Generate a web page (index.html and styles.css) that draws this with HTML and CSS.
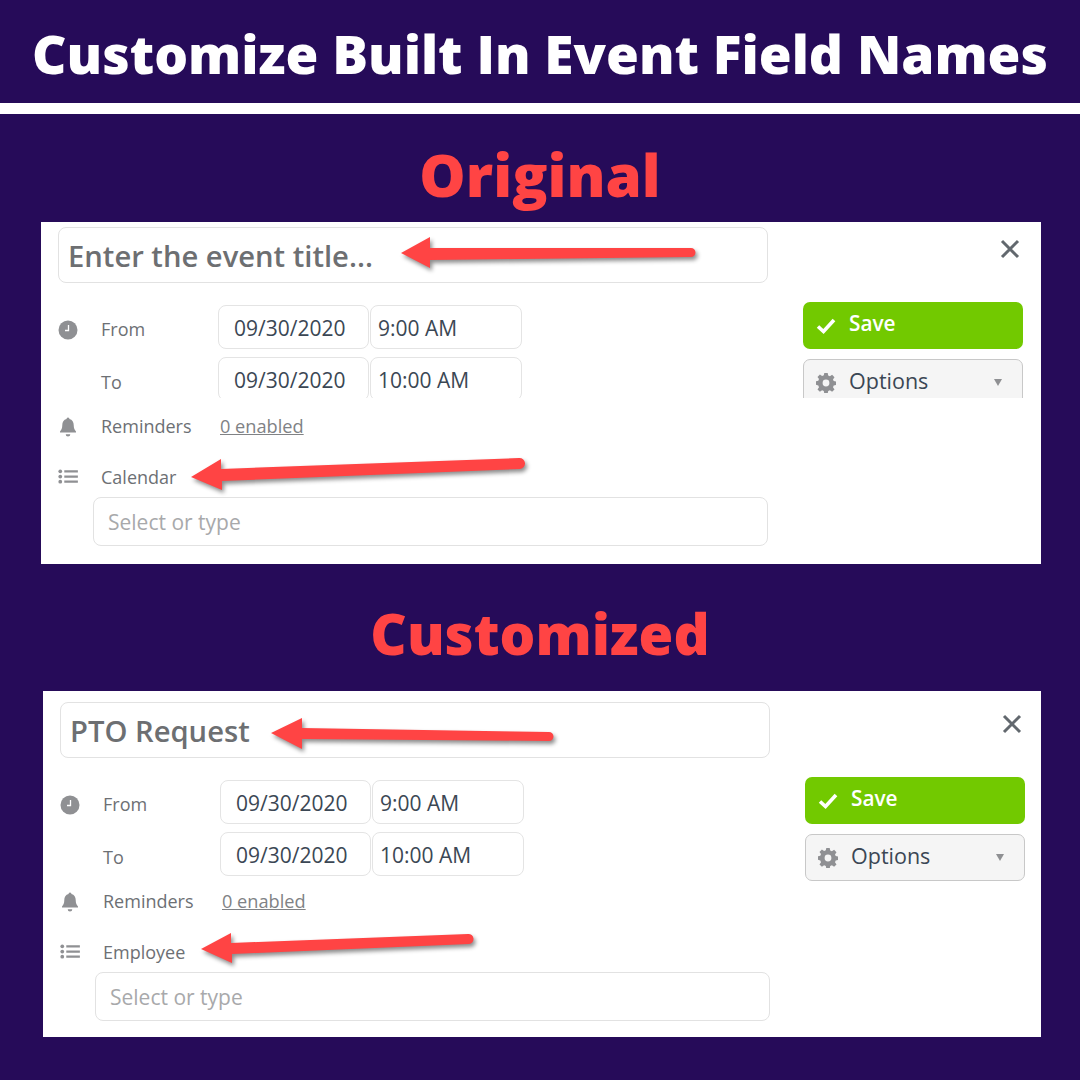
FILE: index.html
```html
<!DOCTYPE html>
<html lang="en">
<head>
    <meta charset="UTF-8">
    <meta name="viewport" content="width=device-width, initial-scale=1.0">
    <title>Customize Built In Event Field Names</title>
    <link rel="stylesheet" href="styles.css">
</head>
<body>

<svg class="icon-defs" aria-hidden="true">
    <symbol id="i-clock" viewBox="0 0 20 20">
        <circle cx="10" cy="10" r="9.5" fill="#8f9093"/>
        <path d="M10.500 5V10.500H7" fill="none" stroke="#fff" stroke-width="1.300"/>
    </symbol>
    <symbol id="i-bell" viewBox="0 0 20 20">
        <path d="M10 .5a1.4 1.4 0 0 1 1.4 1.6c3 .7 4.3 3 4.3 6 0 3.600 1 4.800 2.300 6.400v1H2v-1c1.300-1.600 2.300-2.800 2.300-6.400 0-3 1.300-5.300 4.300-6A1.400 1.400 0 0 1 10 .5zM7.700 17.200h4.600a2.300 2.300 0 0 1-4.600 0z" fill="#8f9093"/>
    </symbol>
    <symbol id="i-list" viewBox="0 0 22 16">
        <circle cx="2.200" cy="2.500" r="2" fill="#8f9093"/>
        <circle cx="2.200" cy="8" r="2" fill="#8f9093"/>
        <circle cx="2.200" cy="13.500" r="2" fill="#8f9093"/>
        <path d="M6.500 2.500H21M6.500 8H21M6.500 13.500H21" stroke="#8f9093" stroke-width="2.400"/>
    </symbol>
    <symbol id="i-gear" viewBox="0 0 20 20">
        <path d="M8.300 0h3.400l.5 2.600 1.700.7 2.200-1.500 2.400 2.400-1.500 2.200.7 1.700 2.600.5v3.400l-2.600.5-.7 1.700 1.500 2.200-2.400 2.400-2.200-1.500-1.700.7-.5 2.600H8.300l-.5-2.600-1.700-.7-2.200 1.500-2.400-2.400 1.500-2.200-.7-1.700L-.3 11.700V8.300l2.600-.5.7-1.700-1.500-2.200 2.400-2.400 2.200 1.500 1.700-.7zM10 6.600a3.400 3.400 0 1 0 0 6.800 3.400 3.400 0 0 0 0-6.800z" fill="#8f9093" fill-rule="evenodd"/>
    </symbol>
    <symbol id="i-check" viewBox="0 0 20 16">
        <path d="M2 8.500l5.500 5L18 2" fill="none" stroke="#fff" stroke-width="3.600"/>
    </symbol>
    <symbol id="i-close" viewBox="0 0 20 20">
        <path d="M2 2l16 16M18 2L2 18" fill="none" stroke="#62686e" stroke-width="3"/>
    </symbol>
</svg>

<header class="top-bar">
    <h1>Customize Built In Event Field Names</h1>
</header>
<div class="rule"></div>

<main>
    <!-- Original form -->
    <h2 class="heading heading-first">Original</h2>
    <section class="card card-original">
        <div class="card-top">
            <div class="title-row">
                <div class="title-input">Enter the event title...</div>
                <svg class="close-icon"><use href="#i-close"/></svg>
            </div>
            <div class="form-body">
                <div class="time-rows">
                    <div class="row">
                        <span class="row-icon row-icon-clock"><svg class="icon"><use href="#i-clock"/></svg></span>
                        <span class="label label-time">From</span>
                        <div class="box box-date">09/30/2020</div>
                        <div class="box box-time">9:00 AM</div>
                    </div>
                    <div class="row">
                        <span class="row-icon"></span>
                        <span class="label label-time label-to">To</span>
                        <div class="box box-date">09/30/2020</div>
                        <div class="box box-time">10:00 AM</div>
                    </div>
                </div>
                <div class="actions">
                    <button class="btn btn-save"><svg class="icon"><use href="#i-check"/></svg><span class="btn-text">Save</span></button>
                    <button class="btn btn-options"><svg class="icon"><use href="#i-gear"/></svg><span class="btn-text">Options</span><span class="caret"></span></button>
                </div>
            </div>
        </div>
        <div class="row reminder-row">
            <span class="row-icon"><svg class="icon"><use href="#i-bell"/></svg></span>
            <span class="label label-reminders">Reminders</span>
            <a class="enabled-link">0 enabled</a>
        </div>
        <div class="row calendar-row">
            <span class="row-icon"><svg class="icon icon-list"><use href="#i-list"/></svg></span>
            <span class="label">Calendar</span>
        </div>
        <div class="select-box">Select or type</div>
    </section>

    <!-- Customized form -->
    <h2 class="heading heading-second">Customized</h2>
    <section class="card card-custom">
        <div class="card-top">
            <div class="title-row">
                <div class="title-input">PTO Request</div>
                <svg class="close-icon"><use href="#i-close"/></svg>
            </div>
            <div class="form-body">
                <div class="time-rows">
                    <div class="row">
                        <span class="row-icon row-icon-clock"><svg class="icon"><use href="#i-clock"/></svg></span>
                        <span class="label label-time">From</span>
                        <div class="box box-date">09/30/2020</div>
                        <div class="box box-time">9:00 AM</div>
                    </div>
                    <div class="row">
                        <span class="row-icon"></span>
                        <span class="label label-time label-to">To</span>
                        <div class="box box-date">09/30/2020</div>
                        <div class="box box-time">10:00 AM</div>
                    </div>
                </div>
                <div class="actions">
                    <button class="btn btn-save"><svg class="icon"><use href="#i-check"/></svg><span class="btn-text">Save</span></button>
                    <button class="btn btn-options"><svg class="icon"><use href="#i-gear"/></svg><span class="btn-text">Options</span><span class="caret"></span></button>
                </div>
            </div>
        </div>
        <div class="row reminder-row">
            <span class="row-icon"><svg class="icon"><use href="#i-bell"/></svg></span>
            <span class="label label-reminders">Reminders</span>
            <a class="enabled-link">0 enabled</a>
        </div>
        <div class="row calendar-row">
            <span class="row-icon"><svg class="icon icon-list"><use href="#i-list"/></svg></span>
            <span class="label">Employee</span>
        </div>
        <div class="select-box">Select or type</div>
    </section>
</main>

<!-- Red annotation arrows, drawn over the forms -->
<svg class="arrows" viewBox="0 0 1080 1080" aria-hidden="true">
    <path d="M401 253L430 237V248L691 248A4.500 4.500 0 0 1 691 257L430 260V268Z"/>
    <path d="M191 477L221 459V469L519 458A5 5 0 0 1 520 469L222 481V490Z"/>
    <path d="M271 733L302 718V728L549 732A4.500 4.500 0 0 1 549 741L302 739V749Z"/>
    <path d="M201 949L231 933V943L468 934A5 5 0 0 1 469 944L232 954V963Z"/>
</svg>

</body>
</html>
```

FILE: styles.css
```css
html, body {
    margin: 0;
    padding: 0;
}
body {
    position: relative;
    width: 1080px;
    height: 1080px;
    overflow: hidden;
    background-color: #260b59;
    font-family: "Open Sans", Arial, sans-serif;
}
.icon-defs {
    position: absolute;
    width: 0;
    height: 0;
}
.top-bar {
    height: 103px;
    display: flex;
    align-items: center;
    justify-content: center;
}
.top-bar h1 {
    margin: 5px 0 0;
    font-size: 53.200px;
    font-weight: 800;
    line-height: 1;
    color: #fff;
    white-space: nowrap;
}
.rule {
    height: 11px;
    background-color: #fff;
}
.heading {
    margin: 0;
    text-align: center;
    font-weight: 800;
    line-height: 1;
    color: #ff4444;
}
.heading-first {
    padding-top: 32px;
    height: 76px;
    font-size: 58.300px;
}
.heading-second {
    padding-top: 41px;
    height: 86px;
    font-size: 56.300px;
}
.card {
    background-color: #fff;
    box-sizing: border-box;
}
.card-original {
    width: 1000px;
    height: 342px;
    margin-left: 41px;
}
.card-custom {
    width: 998px;
    height: 346px;
    margin-left: 43px;
}
.card-top {
    box-sizing: border-box;
    padding-left: 17px;
}
.card-original .card-top {
    height: 176px;
    padding-top: 5px;
    overflow: hidden;
}
.card-custom .card-top {
    height: 190px;
    padding-top: 11px;
}
.title-row {
    display: flex;
    align-items: flex-start;
}
.title-input {
    box-sizing: border-box;
    width: 710px;
    height: 56px;
    padding-left: 9px;
    border: 1px solid #e2e2e2;
    border-radius: 8px;
    font-size: 29.200px;
    font-weight: 600;
    line-height: 56px;
    color: #6d6f72;
}
.close-icon {
    width: 20px;
    height: 20px;
    margin: 12px 0 0 232px;
}
.form-body {
    display: flex;
    align-items: flex-start;
    margin-top: 22px;
}
.time-rows {
    width: 745px;
    display: flex;
    flex-direction: column;
    gap: 8px;
}
.row {
    display: flex;
    align-items: center;
}
.row-icon {
    width: 43px;
    flex: none;
    display: flex;
}
.row-icon-clock {
    margin-top: 6px;
}
.icon {
    width: 20px;
    height: 20px;
    flex: none;
}
.icon-list {
    width: 21px;
    height: 15px;
}
.label {
    font-size: 18px;
    color: #6d7074;
}
.label-time {
    width: 117px;
    flex: none;
    padding-top: 3px;
}
.label-to {
    padding-top: 6px;
}
.box {
    box-sizing: border-box;
    height: 44px;
    padding-left: 15px;
    border: 1px solid #e4e4e4;
    border-radius: 8px;
    font-size: 21px;
    line-height: 44px;
    color: #3b4754;
}
.box-date {
    width: 151px;
}
.box-time {
    width: 152px;
    margin-left: 1px;
    padding-left: 7px;
}
.actions {
    width: 220px;
    margin-top: -3px;
    display: flex;
    flex-direction: column;
    gap: 10px;
}
.btn {
    box-sizing: border-box;
    height: 47px;
    padding: 0 0 0 13px;
    display: flex;
    align-items: center;
    gap: 13px;
    border-radius: 7px;
    font-family: inherit;
    font-size: 21.500px;
}
.btn-text {
    margin-top: -4px;
}
.btn-save {
    border: none;
    background-color: #72c900;
    color: #fff;
    font-size: 20.800px;
    font-weight: 600;
}
.btn-save .btn-text {
    margin-top: -6px;
}
.btn-options {
    border: 1px solid #c8c8c8;
    background-color: #f5f5f5;
    color: #3b4754;
    padding-left: 12px;
}
.caret {
    width: 0;
    height: 0;
    margin-left: auto;
    margin-right: 20px;
    border-left: 4.500px solid transparent;
    border-right: 4.500px solid transparent;
    border-top: 7px solid #8f9093;
}
.reminder-row,
.calendar-row {
    height: 25px;
    padding-left: 17px;
}
.card-original .reminder-row {
    margin-top: 15px;
}
.card-custom .reminder-row {
    margin-top: 7px;
}
.calendar-row {
    margin-top: 26px;
}
.reminder-row .row-icon {
    margin-top: 2px;
}
.label-reminders {
    width: 119px;
    flex: none;
}
.enabled-link {
    font-size: 18.200px;
    color: #808285;
    text-decoration: underline;
}
.select-box {
    box-sizing: border-box;
    width: 675px;
    height: 49px;
    margin: 8px 0 0 52px;
    padding-left: 14px;
    border: 1px solid #e2e2e2;
    border-radius: 8px;
    font-size: 21px;
    line-height: 48px;
    color: #a8a9ab;
}
.arrows {
    position: absolute;
    top: 0;
    left: 0;
    width: 1080px;
    height: 1080px;
    pointer-events: none;
    fill: #ff4444;
    filter: drop-shadow(2px 3px 2px rgba(0, 0, 0, 0.45));
}
```
